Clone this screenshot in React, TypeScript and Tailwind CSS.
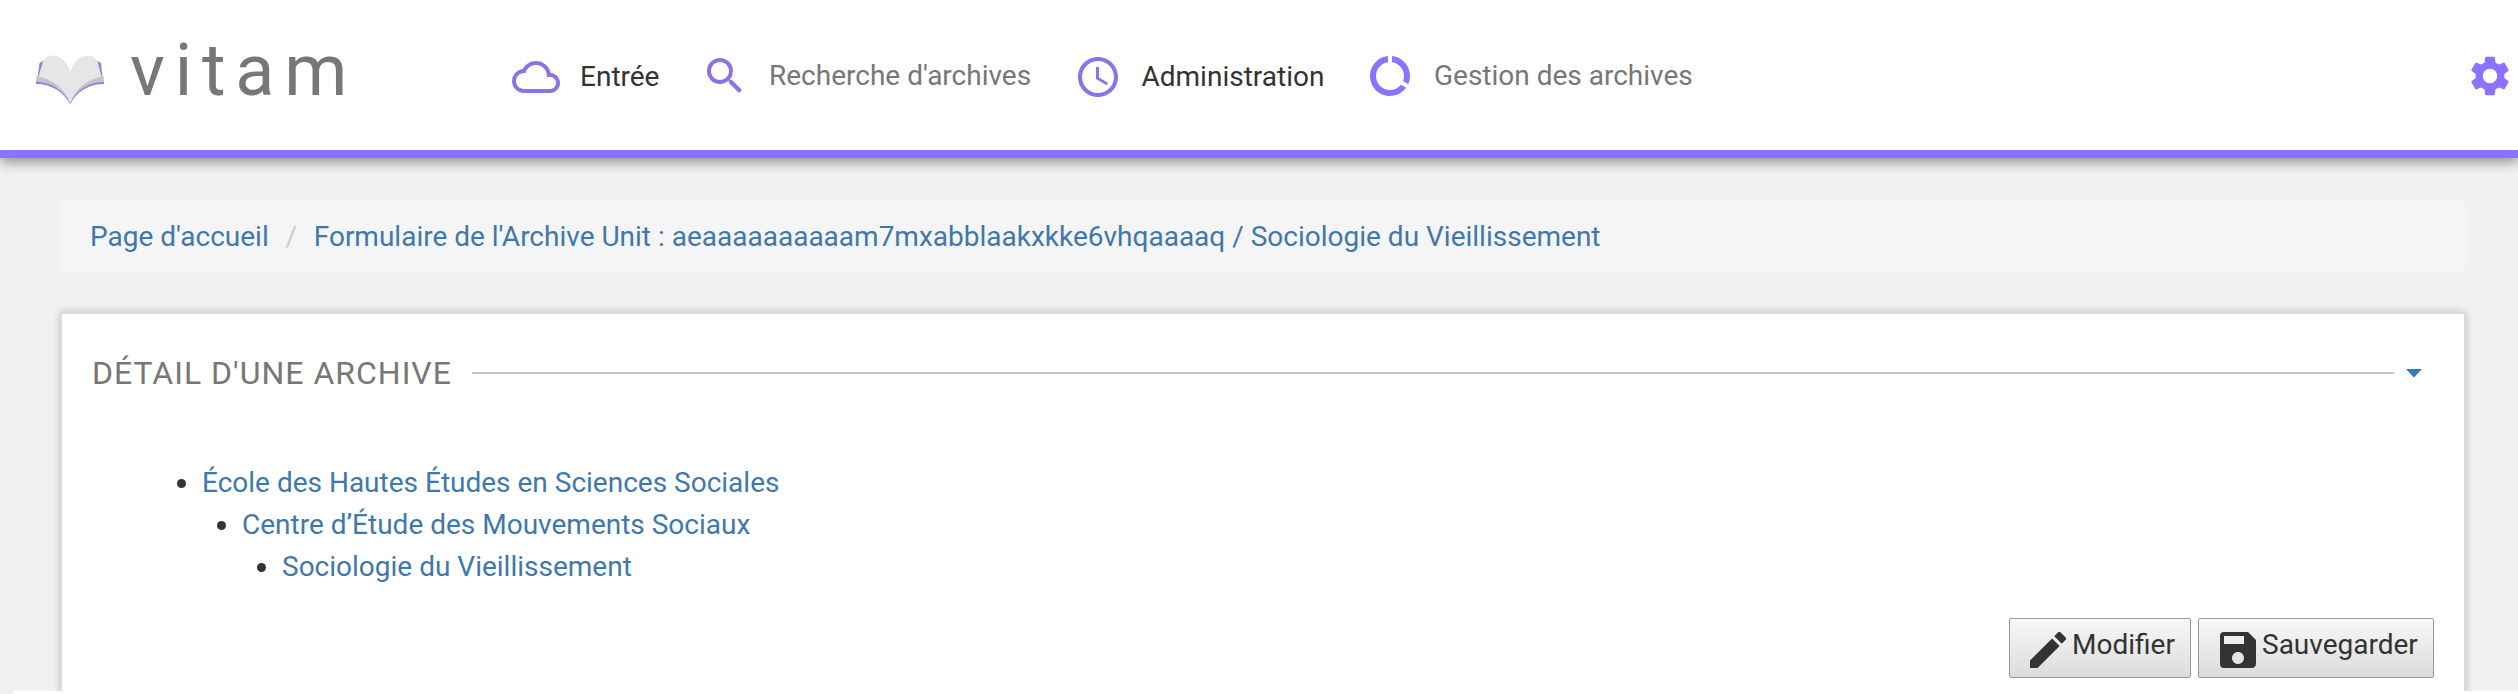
import { MdCloudQueue, MdSearch, MdAccessTime, MdDataUsage, MdSettings, MdEdit, MdSave } from "react-icons/md";

function BookLogo() {
  return (
    <svg className="mt-[55px] h-[50px] w-[70px] shrink-0" viewBox="0 0 70 50">
      <path d="M4.500 8 L9 5.500 L6 23 L2.500 23 Z" fill="#8f83d8" />
      <path d="M66 8 L61.500 5.500 L64.500 23 L67.500 23 Z" fill="#8f83d8" />
      <path d="M1 25 L69 25 L69 29 C54 29 42 36 35.200 49 C28 36 16 29 1 29 Z" fill="#8f7df0" />
      <path d="M1.500 21 L68.500 21 L69 27 C54 27 42 34.500 35.200 48 C28 34.500 16 27 1 27 Z" fill="#c4c4c8" />
      <path d="M8 6.500 C10 2.500 13 0.500 17 0.500 C26 0.500 32 7 35.200 17 C38.500 7 44 0.500 53 0.500 C57.500 0.500 60.500 2.500 62.500 6.500 L66.500 21.500 C53 25 41 32 35.200 48 C29 32 17 25 3.500 21.500 Z" fill="#e6e6e6" />
    </svg>
  );
}

const link = "text-[#3f78ad]";

export default function App() {
  return (
    <div className="flex h-[694px] w-[2518px] flex-col overflow-hidden bg-[#f1f1f1] font-[Roboto,sans-serif] text-[28px] leading-[40px] text-[#333]">
      <header className="z-10 flex h-[158px] shrink-0 border-b-8 border-[#8c72ff] bg-white shadow-[0_4px_12px_rgba(0,0,0,0.42)]">
        <div className="flex w-[512px] shrink-0 pl-[35px]">
          <BookLogo />
          <span className="ml-[25px] mt-[29px] text-[72px] leading-[84px] tracking-[9.800px] text-[#777]">vitam</span>
        </div>
        <nav className="flex grow">
          <a className="flex w-[189px] shrink-0">
            <MdCloudQueue className="mt-[53px] size-12 shrink-0 text-[#8c72e8]" />
            <span className="ml-5 mt-[57px]">Entrée</span>
          </a>
          <a className="flex w-[372.5px] shrink-0 whitespace-nowrap">
            <MdSearch className="mt-[52px] size-12 shrink-0 text-[#8c72e8]" />
            <span className="ml-5 mt-[56px] text-[#777]">Recherche d'archives</span>
          </a>
          <a className="flex w-[292.5px] shrink-0 whitespace-nowrap">
            <MdAccessTime className="mt-[53px] size-12 shrink-0 text-[#8c72e8]" />
            <span className="ml-5 mt-[57px]">Administration</span>
          </a>
          <a className="flex shrink-0 whitespace-nowrap">
            <MdDataUsage className="mt-[52px] size-12 shrink-0 text-[#8c72ff]" />
            <span className="ml-5 mt-[56px] text-[#777]">Gestion des archives</span>
          </a>
          <MdSettings className="ml-auto mr-1 mt-[52px] size-12 shrink-0 text-[#8c72ff]" />
        </nav>
      </header>

      <main className="flex h-[533px] shrink-0 flex-col overflow-hidden pl-[60px] pr-[52px] pt-[42px]">
        <nav className="flex h-[72px] shrink-0 items-center rounded-lg bg-[#f5f5f5] px-[30px] pt-[2px]">
          <a className={link}>Page d'accueil</a>
          <span className="w-[45px] text-center text-[#ccc]">/</span>
          <a className={link}>Formulaire de l'Archive Unit : aeaaaaaaaaaam7mxabblaakxkke6vhqaaaaq / Sociologie du Vieillissement</a>
        </nav>

        <section className="mt-10 h-[420px] shrink-0 border-2 border-[#dadada] bg-white shadow-[0_0_8px_rgba(0,0,0,0.2)]">
          <div className="flex items-center pl-[30px] pr-[42px] pt-[37px]">
            <h1 className="text-[32px] leading-[44px] tracking-[1px] text-[#777]">DÉTAIL D'UNE ARCHIVE</h1>
            <div className="ml-[20px] mr-[12px] h-[2px] grow bg-[#c8c8c8]" />
            <svg className="h-[9px] w-4" viewBox="0 0 16 9">
              <path d="M0 0H16L8 8.500Z" fill="#337ab7" />
            </svg>
          </div>
          <ul className={"mt-[67px] pl-[140px] leading-[42px] " + link}>
            <li className="flex items-center">
              <span className="-ml-[25px] mr-4 size-[9px] rounded-full bg-[#333]" />École des Hautes Études en Sciences Sociales
            </li>
            <li className="flex items-center pl-10">
              <span className="-ml-[25px] mr-4 size-[9px] rounded-full bg-[#333]" />Centre d’Étude des Mouvements Sociaux
            </li>
            <li className="flex items-center pl-20">
              <span className="-ml-[25px] mr-4 size-[9px] rounded-full bg-[#333]" />Sociologie du Vieillissement
            </li>
          </ul>
          <div className="mt-[30px] flex justify-end gap-[7px] pr-[30px]">
            <button className="flex h-[60px] w-[182px] rounded-[2px] border border-[#999] bg-linear-to-b from-[#f8f8f8] to-[#dcdcdc] pl-[14px]">
              <MdEdit className="mt-[7px] size-12 shrink-0" />
              <span className="mt-[6px]">Modifier</span>
            </button>
            <button className="flex h-[60px] w-[236px] rounded-[2px] border border-[#999] bg-linear-to-b from-[#f8f8f8] to-[#dcdcdc] pl-[15px]">
              <MdSave className="mt-[7px] size-12 shrink-0" />
              <span className="mt-[6px]">Sauvegarder</span>
            </button>
          </div>
        </section>
      </main>
      <div className="ml-[13px] h-[3px] shrink-0 bg-white" />
    </div>
  );
}
